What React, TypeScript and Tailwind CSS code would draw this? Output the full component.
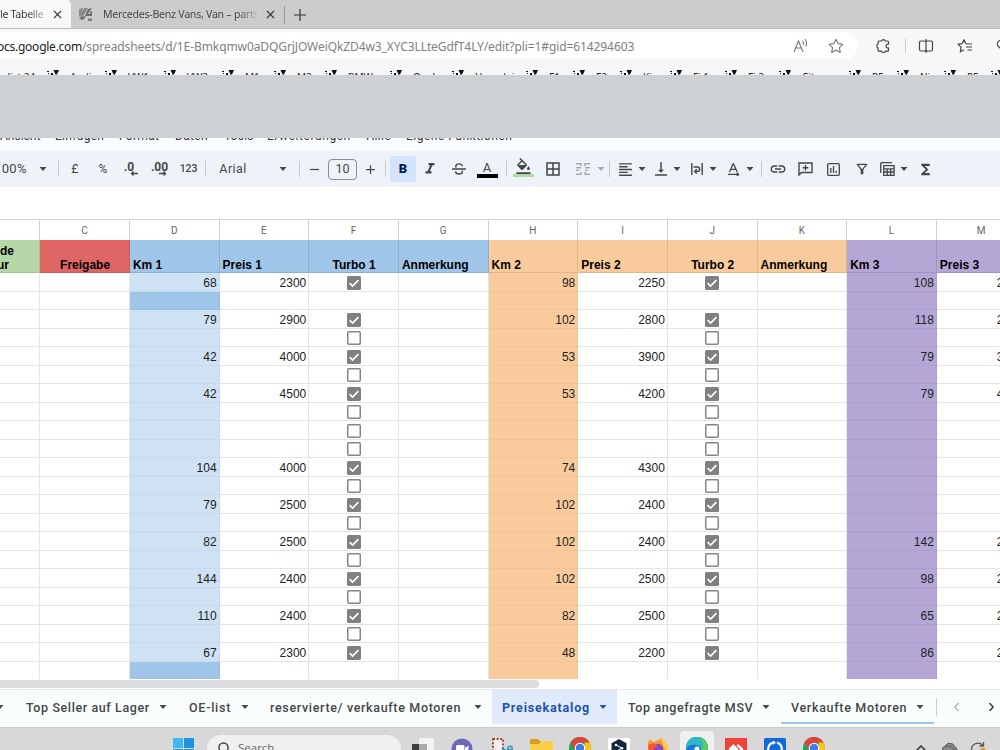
import React from "react";
import {
  MdAdd,
  MdBorderAll,
  MdFormatAlignLeft,
  MdFormatColorFill,
  MdFormatItalic,
  MdFunctions,
  MdLink,
  MdOutlineFilterAlt,
  MdRemove,
  MdVerticalAlignBottom,
} from "react-icons/md";

type Mark = "on" | "off" | "none";

type SheetRow = {
  mark: Mark;
  values?: string[];
};

const rows: SheetRow[] = [
  { mark: "on", values: ["68", "2300", "98", "2250", "108", "2300"] },
  { mark: "none" },
  { mark: "on", values: ["79", "2900", "102", "2800", "118", "2700"] },
  { mark: "off" },
  { mark: "on", values: ["42", "4000", "53", "3900", "79", "3700"] },
  { mark: "off" },
  { mark: "on", values: ["42", "4500", "53", "4200", "79", "4000"] },
  { mark: "off" },
  { mark: "off" },
  { mark: "off" },
  { mark: "on", values: ["104", "4000", "74", "4300", "", ""] },
  { mark: "off" },
  { mark: "on", values: ["79", "2500", "102", "2400", "", ""] },
  { mark: "off" },
  { mark: "on", values: ["82", "2500", "102", "2400", "142", "2300"] },
  { mark: "off" },
  { mark: "on", values: ["144", "2400", "102", "2500", "98", "2500"] },
  { mark: "off" },
  { mark: "on", values: ["110", "2400", "82", "2500", "65", "2600"] },
  { mark: "off" },
  { mark: "on", values: ["67", "2300", "48", "2200", "86", "2200"] },
  { mark: "none" },
];

const headers = [
  { letter: "C", label: "Freigabe", cls: "bg-[#e06666] justify-center pr-[2px]" },
  { letter: "D", label: "Km 1", cls: "bg-[#9fc5e8]" },
  { letter: "E", label: "Preis 1", cls: "bg-[#9fc5e8]" },
  { letter: "F", label: "Turbo 1", cls: "bg-[#9fc5e8] justify-center pr-[2px]" },
  { letter: "G", label: "Anmerkung", cls: "bg-[#9fc5e8]" },
  { letter: "H", label: "Km 2", cls: "bg-[#f9cb9c]" },
  { letter: "I", label: "Preis 2", cls: "bg-[#f9cb9c]" },
  { letter: "J", label: "Turbo 2", cls: "bg-[#f9cb9c] justify-center pr-[2px]" },
  { letter: "K", label: "Anmerkung", cls: "bg-[#f9cb9c]" },
  { letter: "L", label: "Km 3", cls: "bg-[#b4a7d6]" },
  { letter: "M", label: "Preis 3", cls: "bg-[#b4a7d6]" },
];

const bookmarks = [
  { label: "Audi", cls: "w-[58px]" },
  { label: "VW1", cls: "w-[59px]" },
  { label: "VW2", cls: "w-[58px]" },
  { label: "M1", cls: "w-[52px]" },
  { label: "M2", cls: "w-[51px]" },
  { label: "BMW", cls: "w-[65px]" },
  { label: "Opel", cls: "w-[62px]" },
  { label: "Hyundai", cls: "w-[74px]" },
  { label: "F1", cls: "w-[47px]" },
  { label: "F2", cls: "w-[47px]" },
  { label: "Kia", cls: "w-[50px]" },
  { label: "Fi 1", cls: "w-[55px]" },
  { label: "Fi 2", cls: "w-[54px]" },
  { label: "Citroen", cls: "w-[70px]" },
  { label: "P5", cls: "w-[48px]" },
  { label: "Nis", cls: "w-[47px]" },
  { label: "P5", cls: "w-[47px]" },
  { label: "", cls: "w-[20px]" },
];

const Close = ({ cls }: { cls: string }) => (
  <svg viewBox="0 0 10 10" className={`h-[9px] w-[9px] shrink-0 ${cls}`} stroke="#333" strokeWidth="1.4" fill="none">
    <path d="M1 1l8 8M9 1l-8 8" />
  </svg>
);

const TabStrip = () => (
  <div className="flex h-[29px] items-end border-b border-[#bdbdbd] bg-[#cdcccc] font-['Noto_Sans','Open_Sans',sans-serif] text-[11px] text-[#333]">
    <div className="flex h-[29px] w-[71px] items-center rounded-tr-md bg-[#f9f8f8]">
      <span className="w-[44px] whitespace-nowrap bg-gradient-to-r from-[#333] from-60% to-[#bbb] bg-clip-text pt-[2px] text-[10.6px] tracking-[-0.3px] text-transparent">
        le Tabelle
      </span>
      <Close cls="ml-[9px] mt-[2px]" />
    </div>
    <div className="flex h-[29px] items-center pt-[2px]">
      <svg viewBox="0 0 14 14" className="ml-[8px] h-[14px] w-[14px]">
        <path d="M0 1l4-1-1 6-3 3zM5 0h4L5 7 0 13l2-6z" fill="#8b8b8b" />
        <path d="M9 1l4-1-4 6h2V4l2-1v5H6zM2 9l5-1-2 3-3 1z" fill="#6d6d6d" />
        <path d="M9 10.500h4V13H9z" fill="#7d7d7d" />
      </svg>
      <span className="ml-[10px] w-[154px] whitespace-nowrap bg-gradient-to-r from-[#444] from-88% to-[#bbb] bg-clip-text text-[10.6px] tracking-[-0.26px] text-transparent">
        Mercedes-Benz Vans, Van – parts
      </span>
      <Close cls="ml-[9px]" />
      <span className="ml-[9px] h-[18px] w-px bg-[#999]" />
      <svg viewBox="0 0 12 12" className="ml-[9px] h-[12px] w-[12px]" stroke="#333" strokeWidth="1.2">
        <path d="M6 0v12M0 6h12" />
      </svg>
    </div>
  </div>
);

const AddressBar = () => (
  <div className="flex h-[33px] items-center bg-[#f7f7f7] text-[#555]">
    <div className="flex h-[27px] w-[858px] shrink-0 items-center rounded-r-full bg-white font-['Noto_Sans','Open_Sans',sans-serif] text-[12px] whitespace-nowrap">
      <span className="-ml-[3px] w-[85px] shrink-0 pt-[2px] text-[#222] tracking-[-0.25px]">ocs.google.com</span>
      <span className="w-[700px] shrink-0 pt-[2px] text-[#808080] tracking-[-0.09px]">
        /spreadsheets/d/1E-Bmkqmw0aDQGrjJOWeiQkZD4w3_XYC3LLteGdfT4LY/edit?pli=1#gid=614294603
      </span>
      <svg viewBox="0 0 16 16" className="ml-[11px] h-4 w-4 shrink-0" fill="none" stroke="#777" strokeWidth="1.1">
        <path d="M1 14L5.500 3L10 14M2.700 10h5.600M9.500 2.500q1.600 2 .600 4.500M12 1q2.600 3.500.800 7.500" />
      </svg>
      <svg viewBox="0 0 16 16" className="ml-[19px] h-4 w-4 shrink-0" fill="none" stroke="#777" strokeWidth="1.1" strokeLinejoin="round">
        <path d="M8 1.200l2.100 4.400 4.800.600-3.500 3.400.900 4.800L8 12.100l-4.300 2.300.900-4.800L1.100 6.200l4.800-.600z" />
      </svg>
    </div>
    <svg viewBox="0 0 16 16" className="ml-[17px] h-4 w-4 shrink-0" fill="none" stroke="#444" strokeWidth="1.2" strokeLinejoin="round">
      <path d="M4 3h2.600a1.900 1.900 0 0 1 3.600 0h2.300a1 1 0 0 1 1 1v2.300a1.900 1.900 0 1 0 0 3.600v2.300a1 1 0 0 1-1 1h-2.300a1.900 1.900 0 0 1-3.600 0H4a1 1 0 0 1-1-1V9.900a1.900 1.900 0 0 1 0-3.600V4a1 1 0 0 1 1-1z" />
    </svg>
    <span className="ml-[14px] h-[14px] w-px shrink-0 bg-[#ccc]" />
    <svg viewBox="0 0 16 16" className="ml-[12px] h-4 w-4 shrink-0" fill="none" stroke="#444" strokeWidth="1.2">
      <path d="M6 3H3a1.500 1.500 0 0 0-1.500 1.500v7A1.500 1.500 0 0 0 3 13h3a2 2 0 0 0 2-1V4a2 2 0 0 0-2-1zM10 3h3a1.500 1.500 0 0 1 1.500 1.500v7A1.500 1.500 0 0 1 13 13h-3a2 2 0 0 1-2-1M8 1v14M8 4a2 2 0 0 1 2-1" />
    </svg>
    <svg viewBox="0 0 16 16" className="ml-[23px] h-4 w-4 shrink-0" fill="none" stroke="#444" strokeWidth="1.2" strokeLinejoin="round">
      <path d="M9.500 5.500h-.800L7 1.800 5.200 5.600 1 6.200l3 3-.700 4.600L7 11.800M9.500 6H15M9 9h6M10.500 12H15" />
    </svg>
    <svg viewBox="0 0 16 16" className="ml-[23px] h-4 w-4 shrink-0" fill="none" stroke="#444" strokeWidth="1.2">
      <path d="M8 13.500L2 8a3.600 3.600 0 0 1 6-4" />
    </svg>
  </div>
);

const BookmarkBar = () => (
  <div className="flex h-[13px] overflow-hidden bg-[#f7f7f7] font-['Noto_Sans','Open_Sans',sans-serif] text-[10px] text-[#222]">
    <span className="mt-[8px] w-[47px] shrink-0 pl-1 leading-[14px] whitespace-nowrap">dist 24</span>
    {bookmarks.map((b, i) => (
      <div key={i} className={`flex shrink-0 ${b.cls}`}>
        <svg viewBox="0 0 12 10" className="mt-[8px] h-[10px] w-[12px] shrink-0" fill="#111">
          <path d="M0 1h2v1H0zM4 3h2v2H4zM1 3h1v1H1zM6.500 0H12l-2 4.500H8.500z" />
        </svg>
        <span className="mt-[8px] pl-[11px] leading-[14px] whitespace-nowrap">{b.label}</span>
      </div>
    ))}
  </div>
);

const MenuBar = () => (
  <div className="flex h-[13px] items-end overflow-hidden bg-[#fafdfe] font-[Roboto,sans-serif] text-[12px] text-[#333]">
    <div className="flex h-[13px] items-start leading-[14px] whitespace-nowrap">
      <span className="-mt-[9px] w-[55px]">Ansicht</span>
      <span className="-mt-[9px] w-[64px] tracking-[0.3px]">Einfügen</span>
      <span className="-mt-[9px] w-[56px] tracking-[0.3px]">Format</span>
      <span className="-mt-[9px] w-[49px] tracking-[0.3px]">Daten</span>
      <span className="-mt-[9px] w-[43px]">Tools</span>
      <span className="-mt-[9px] w-[99px] tracking-[0.55px]">Erweiterungen</span>
      <span className="-mt-[9px] w-[40px]">Hilfe</span>
      <span className="-mt-[9px] tracking-[0.5px]">Eigene Funktionen</span>
    </div>
  </div>
);

const Caret = ({ cls }: { cls: string }) => (
  <svg viewBox="0 0 8 4" className={`h-1 w-2 shrink-0 ${cls}`} fill="currentColor">
    <path d="M.5 0h7L4 4z" />
  </svg>
);

const Divider = ({ cls }: { cls: string }) => <span className={`h-4 w-px shrink-0 bg-[#c7cad0] ${cls}`} />;

const Slot = ({ cls, children }: { cls: string; children: React.ReactNode }) => (
  <span className={`flex shrink-0 items-center justify-center whitespace-nowrap ${cls}`}>{children}</span>
);

const Toolbar = () => (
  <div className="flex h-[36px] items-center overflow-hidden bg-[#eef3fa] font-[Roboto,sans-serif] text-[12.5px] text-[#444746]">
    <Slot cls="w-[27px] justify-end">
      <span className="text-[13px] tracking-[0.4px]">100%</span>
    </Slot>
    <Caret cls="ml-[11.5px]" />
    <Divider cls="ml-[11px]" />
    <Slot cls="ml-[8.5px] w-4">£</Slot>
    <Slot cls="ml-[12px] w-4 text-[12px]">%</Slot>
    <Slot cls="ml-[12px] w-4 flex-col">
      <span className="-ml-[4px] text-[12px] leading-[10px] font-bold">.0</span>
      <svg viewBox="0 0 8 5" className="-mt-px ml-[6px] h-[5px] w-2" fill="none" stroke="currentColor" strokeWidth="1.3">
        <path d="M8 2.500H1.500M3.500 .5l-2 2 2 2" />
      </svg>
    </Slot>
    <Slot cls="ml-[12.5px] w-4 flex-col">
      <span className="text-[12px] leading-[10px] font-bold">.00</span>
      <svg viewBox="0 0 8 5" className="-mt-px ml-[6px] h-[5px] w-2" fill="none" stroke="currentColor" strokeWidth="1.3">
        <path d="M0 2.500h6.500M4.500 .5l2 2-2 2" />
      </svg>
    </Slot>
    <Slot cls="ml-[13px] w-4 text-[10.5px]">
      <span className="font-medium -tracking-[0.2px]">123</span>
    </Slot>
    <Divider cls="ml-[8.5px]" />
    <Slot cls="ml-[13px] w-[28px]">
      <span className="tracking-[0.4px]">Arial</span>
    </Slot>
    <Caret cls="ml-[32px]" />
    <Divider cls="ml-[12px]" />
    <Slot cls="ml-[6px] w-4">
      <MdRemove className="h-[15px] w-[15px] shrink-0" />
    </Slot>
    <Slot cls="ml-[6px] h-[21px] w-[29px] rounded-[4px] border border-[#8a8d8c] text-[12.5px]">10</Slot>
    <Slot cls="ml-[5.5px] w-4">
      <MdAdd className="h-[15px] w-[15px] shrink-0" />
    </Slot>
    <Divider cls="ml-[6.5px]" />
    <Slot cls="ml-[4px] h-[26px] w-[26px] rounded-[3px] bg-[#d3e3fd] text-[13px] font-black text-[#041e49]">B</Slot>
    <Slot cls="ml-[6px] w-4">
      <MdFormatItalic className="h-[18px] w-[18px] shrink-0" />
    </Slot>
    <Slot cls="ml-[12.5px] w-4">
      <svg viewBox="0 0 14 12" className="h-3 w-[14px] shrink-0" fill="none" stroke="currentColor" strokeWidth="1.4">
        <path d="M0 6h14M10.300 3.300A3 2.500 0 0 0 7 .9C5 .9 3.800 2 3.800 3.300c0 .5.200.900.500 1.200M3.500 8.300C3.700 10 5.200 11 7 11s3.400-.900 3.400-2.300c0-.4-.1-.800-.3-1.100" />
      </svg>
    </Slot>
    <Slot cls="ml-[9.5px] w-[22px] flex-col pt-px">
      <span className="text-[13px] leading-[13px]">A</span>
      <span className="h-1 w-[21px] bg-black" />
    </Slot>
    <Divider cls="ml-[8px]" />
    <Slot cls="ml-[5px] w-[22px] flex-col">
      <MdFormatColorFill className="-mt-[3px] -mb-px h-[17px] w-[17px] shrink-0" />
      <span className="h-[3px] w-[21px] bg-[#b6d7a8]" />
    </Slot>
    <Slot cls="ml-[11px] w-4">
      <MdBorderAll className="h-[18px] w-[18px] shrink-0" />
    </Slot>
    <Slot cls="ml-[14px] w-4 text-[#a5a9ad]">
      <svg viewBox="0 0 14 12" className="h-3 w-[14px]" fill="none" stroke="currentColor" strokeWidth="1.4">
        <path d="M0 .8h5v2.500M9 3.300V.8h5M0 11.200h5V8.700M9 8.700v2.500h5M0 4.700h5M9 4.700h5M0 7.400h3M9 7.400h3" />
      </svg>
    </Slot>
    <Caret cls="ml-[6px] text-[#a5a9ad]" />
    <Divider cls="ml-[4px]" />
    <Slot cls="ml-[7px] w-4">
      <MdFormatAlignLeft className="h-[17px] w-[17px] shrink-0" />
    </Slot>
    <Caret cls="ml-[4.5px]" />
    <Slot cls="ml-[7.5px] w-4">
      <MdVerticalAlignBottom className="h-[18px] w-[18px] shrink-0" />
    </Slot>
    <Caret cls="ml-[4px]" />
    <Slot cls="ml-[8px] w-4">
      <svg viewBox="0 0 12 12" className="h-3 w-3" fill="none" stroke="currentColor" strokeWidth="1.4">
        <path d="M.8 0v12M11.200 0v12M2.500 4h4a2.200 2.200 0 0 1 0 4.400H4M5.800 6.200L3.600 8.400l2.200 2.200" />
      </svg>
    </Slot>
    <Caret cls="ml-[4px]" />
    <Slot cls="ml-[9px] w-4">
      <svg viewBox="0 0 12 13" className="h-[13px] w-3" fill="none" stroke="currentColor" strokeWidth="1.3">
        <path d="M1.500 9L5 1h.6l3.500 8M3 6.300h4.800M0 11.400h10M8.800 9.800l1.800 1.600-1.800 1.600" />
      </svg>
    </Slot>
    <Caret cls="ml-[3.5px]" />
    <Divider cls="ml-[7px]" />
    <Slot cls="ml-[8px] w-4">
      <MdLink className="h-[18px] w-[18px] shrink-0" />
    </Slot>
    <Slot cls="ml-[12px] w-4">
      <svg viewBox="0 0 15 14" className="h-[14px] w-[15px]" fill="none" stroke="currentColor" strokeWidth="1.4">
        <path d="M1 13V1h13v9.500H3.500zM7.500 3v5.600M4.700 5.800h5.600" />
      </svg>
    </Slot>
    <Slot cls="ml-[12px] w-4">
      <svg viewBox="0 0 13 13" className="h-[13px] w-[13px]" fill="none" stroke="currentColor" strokeWidth="1.3">
        <rect x=".7" y=".7" width="11.6" height="11.6" rx="1" />
        <path d="M3.800 5v5M6.500 3v7M9.200 7.800V10" />
      </svg>
    </Slot>
    <Slot cls="ml-[12px] w-4">
      <MdOutlineFilterAlt className="h-4 w-4 shrink-0" />
    </Slot>
    <Slot cls="ml-[10px] w-4">
      <svg viewBox="0 0 15 14" className="h-[14px] w-[15px]" fill="none" stroke="currentColor" strokeWidth="1.3">
        <path d="M.7 11V1.700a1 1 0 0 1 1-1H12M3.700 3.600h10.400v9.700H3.700zM3.700 6.800h10.400M3.700 10h10.400M7.200 6.800v6.500M10.700 6.800v6.500" />
      </svg>
    </Slot>
    <Caret cls="ml-[4px]" />
    <Slot cls="ml-[10px] w-4">
      <MdFunctions className="h-[17px] w-[17px] shrink-0" />
    </Slot>
  </div>
);

const CheckMark = ({ mark }: { mark: Mark }) => {
  if (mark === "none") return null;
  return (
    <svg viewBox="0 0 14 14" className="mt-[1.5px] h-[14px] w-[14px]">
      {mark === "on" ? (
        <>
          <rect width="14" height="14" rx="1.5" fill="#808080" />
          <path d="M2.600 7.200l3 2.900 5.800-6" fill="none" stroke="#fff" strokeWidth="1.6" />
        </>
      ) : (
        <rect x=".75" y=".75" width="12.5" height="12.5" rx="1" fill="#fff" stroke="#858585" strokeWidth="1.5" />
      )}
    </svg>
  );
};

const cellBase = "flex h-[18.5px] w-[89.67px] shrink-0 border-r border-b items-center";
const plain = `${cellBase} border-[#e4e4e4]`;
const number = `${cellBase} justify-end pt-[2px] pr-[2px]`;

const DataRow = ({ row, index }: { row: SheetRow; index: number }) => {
  const v = row.values ?? ["", "", "", "", "", ""];
  const km1 = index === 1 || index === 21 ? "bg-[#9fc5e8] border-[#97bfe4]" : "bg-[#cfe2f3] border-[#c5daee]";
  return (
    <div className="flex h-[18.5px]">
      <div className="h-[18.5px] w-[40.3px] shrink-0 border-r border-b border-[#e4e4e4]" />
      <div className={plain} />
      <div className={`${number} ${km1}`}>{v[0]}</div>
      <div className={`${number} border-[#e4e4e4]`}>{v[1]}</div>
      <div className={`${plain} justify-center`}>
        <CheckMark mark={row.mark} />
      </div>
      <div className={plain} />
      <div className={`${number} border-[#f0c497] bg-[#f9cb9c]`}>{v[2]}</div>
      <div className={`${number} border-[#e4e4e4]`}>{v[3]}</div>
      <div className={`${plain} justify-center`}>
        <CheckMark mark={row.mark} />
      </div>
      <div className={plain} />
      <div className={`${number} border-[#ac9fcf] bg-[#b4a7d6]`}>{v[4]}</div>
      <div className={`${number} border-[#e4e4e4]`}>{v[5]}</div>
    </div>
  );
};

const Sheet = () => (
  <div className="h-[460px] overflow-hidden border-t border-[#d5d5d5] bg-white font-['Liberation_Sans',Arial,sans-serif] text-[12px] text-[#222]">
    <div className="flex h-[20px] font-[Roboto,sans-serif] text-[10px] text-[#666]">
      <div className="w-[40.3px] shrink-0 border-r border-[#d0d0d0]" />
      {headers.map((h) => (
        <div key={h.letter} className="flex w-[89.67px] shrink-0 items-center justify-center border-r border-[#d0d0d0]">
          {h.letter}
        </div>
      ))}
    </div>
    <div className="flex h-[33px] font-bold text-black">
      <div className="w-[40.3px] shrink-0 border-r border-b border-black/10 bg-[#b6d7a8] pt-[4px] leading-[14px]">
        <div>de</div>
        <div className="-ml-[3px]">ur</div>
      </div>
      {headers.map((h) => (
        <div
          key={h.letter}
          className={`flex w-[89.67px] shrink-0 items-end border-r border-b border-black/10 pl-[3px] leading-[14px] ${h.cls}`}
        >
          {h.label}
        </div>
      ))}
    </div>
    {rows.map((row, i) => (
      <DataRow key={i} row={row} index={i} />
    ))}
  </div>
);

const SheetTabs = () => (
  <div className="flex h-[38px] items-start border-t border-[#e6eaec] bg-[#f9fdfd] font-[Roboto,sans-serif] text-[12.5px] font-medium text-[#444746]">
    <div className="flex h-[34px] items-center whitespace-nowrap">
      <Caret cls="-ml-[4px]" />
      <span className="ml-[22px] w-[133px] pt-[2px] tracking-[0.6px]">Top Seller auf Lager</span>
      <Caret cls="" />
      <span className="ml-[22px] w-[52px] pt-[2px] tracking-[0.75px]">OE-list</span>
      <Caret cls="" />
      <span className="ml-[21px] w-[204px] pt-[2px] tracking-[0.66px]">reservierte/ verkaufte Motoren</span>
      <Caret cls="" />
      <div className="ml-[10px] flex h-[34px] w-[125px] items-center bg-[#e1eafa] pl-[10px] font-bold text-[#1c55ac]">
        <span className="w-[97px] pt-[2px] tracking-[0.8px]">Preisekatalog</span>
        <Caret cls="" />
      </div>
      <span className="ml-[11px] w-[134px] pt-[2px] tracking-[0.6px]">Top angefragte MSV</span>
      <Caret cls="" />
      <div className="ml-[11px] flex h-[34px] w-[153px] items-center border-b-2 border-[#9fc5e8] pt-[2px] pl-[10px]">
        <span className="w-[125px] pt-[2px] tracking-[0.68px]">Verkaufte Motoren</span>
        <Caret cls="" />
      </div>
      <span className="ml-[2px] h-[18px] w-px bg-[#c8cccc]" />
      <svg viewBox="0 0 5 8" className="ml-[17px] h-2 w-[5px]" fill="none" stroke="#aaa" strokeWidth="1.3">
        <path d="M4.500 0L.8 4l3.700 4" />
      </svg>
      <svg viewBox="0 0 5 8" className="ml-[30px] h-2 w-[5px]" fill="none" stroke="#444" strokeWidth="1.6">
        <path d="M.5 0l3.700 4L.5 8" />
      </svg>
    </div>
  </div>
);

const Chrome = () => (
  <svg viewBox="0 0 24 24" className="h-[22px] w-[22px]">
    <circle cx="12" cy="12" r="12" fill="#2ba24c" />
    <path d="M1.600 6A12 12 0 0 1 22.400 6L12 6.500 7 14z" fill="#dc4437" />
    <path d="M22.400 6A12 12 0 0 1 12 24l5-9V6z" fill="#fbc116" />
    <circle cx="12" cy="12" r="5.8" fill="#fff" />
    <circle cx="12" cy="12" r="4.6" fill="#3e7de8" />
  </svg>
);

const Taskbar = () => (
  <div className="flex h-[23px] items-start overflow-hidden border-t border-[#c9c9c9] bg-[#d9d8d8]">
    <svg viewBox="0 0 21 21" className="mt-[10px] ml-[173px] h-[21px] w-[21px] shrink-0" fill="#1e93dc">
      <path d="M0 0h10v10H0z" fill="#41b9ee" />
      <path d="M11 0h10v10H11zM0 11h10v10H0zM11 11h10v10H11z" />
    </svg>
    <div className="mt-[7px] ml-[13px] flex h-[28px] w-[194px] shrink-0 items-start rounded-full bg-[#f1f0f0] pl-[9px]">
      <svg viewBox="0 0 14 14" className="mt-[7px] h-[14px] w-[14px]" fill="none" stroke="#444" strokeWidth="1.5">
        <circle cx="7.5" cy="5.5" r="4.6" />
        <path d="M4.300 8.800L.5 13" />
      </svg>
      <span className="mt-[5px] ml-[8px] font-['Open_Sans',sans-serif] text-[11.5px] leading-[16px] text-[#666]">Search</span>
    </div>
    <svg viewBox="0 0 22 20" className="mt-[10px] ml-[11px] h-5 w-[22px] shrink-0">
      <path d="M7 0h15v14H7z" fill="#f3f3f3" />
      <path d="M0 6h15v14H0z" fill="#3e3e3e" />
      <path d="M7 6h8v8H7z" fill="#aaa" />
    </svg>
    <svg viewBox="0 0 22 22" className="mt-[10px] ml-[17px] h-[22px] w-[22px] shrink-0">
      <circle cx="11" cy="11" r="10.5" fill="#6b68b8" />
      <rect x="5" y="7" width="8.5" height="9" rx="1.5" fill="#fff" />
      <path d="M14 10l3.500-2.500V15L14 13z" fill="#fff" />
    </svg>
    <svg viewBox="0 0 22 22" className="mt-[10px] ml-[19px] h-[22px] w-[22px] shrink-0" fill="none">
      <path d="M1 1h10v16H1z" fill="#f3eeec" stroke="#a94a35" strokeWidth="2" strokeDasharray="2 1.6" />
      <path d="M10 17l9-6M10 10l9 7" stroke="#3696c4" strokeWidth="2" />
      <circle cx="18" cy="10.5" r="2.2" stroke="#3696c4" strokeWidth="1.6" />
    </svg>
    <svg viewBox="0 0 23 20" className="mt-[11px] ml-[16px] h-5 w-[23px] shrink-0">
      <path d="M0 1a1 1 0 0 1 1-1h7l2 2h12a1 1 0 0 1 1 1v17H0z" fill="#d79c22" />
      <path d="M0 5h9l2-3h12v18H0z" fill="#fbcf4c" />
    </svg>
    <div className="mt-[9px] ml-[16px] shrink-0">
      <Chrome />
    </div>
    <svg viewBox="0 0 22 22" className="mt-[10px] ml-[17px] h-[22px] w-[22px] shrink-0">
      <rect width="22" height="22" rx="2" fill="#fff" />
      <path d="M11 1l7.500 4.300v9L11 19l-7.500-4.700v-9z" fill="#10283c" />
      <path d="M8 7l6 3.200-6 3.300" fill="none" stroke="#fff" strokeWidth="1" />
      <circle cx="8" cy="7" r="1.3" fill="#fff" />
      <circle cx="14" cy="10.2" r="1.3" fill="#fff" />
    </svg>
    <svg viewBox="0 0 22 22" className="mt-[10px] ml-[17px] h-[22px] w-[22px] shrink-0">
      <path d="M1 5l2-4 3 3 6-2 2-2 4 4 3 4v9L11 22 1 17z" fill="#fb9a2b" />
      <path d="M14 0l4 4 3 5v6l-5-8z" fill="#fdd13d" />
      <circle cx="11" cy="11" r="5.2" fill="#7e4ac9" />
      <path d="M1 7l5-2 5 3-4 2v6l-5-2z" fill="#f4553b" />
    </svg>
    <div className="mt-[3px] ml-[11px] flex h-[30px] w-[34px] shrink-0 justify-center rounded-t bg-[#efefef] pt-[6px]">
      <svg viewBox="0 0 22 22" className="h-[22px] w-[22px]">
        <circle cx="11" cy="11" r="11" fill="#1a78d0" />
        <path d="M0 10a11 11 0 0 1 22 1c0 4-4 5-8 4 2-2 1-6-3-7-5-1-9 0-11 4z" fill="#2fb9c7" />
        <path d="M13 .2A11 11 0 0 1 22 11c0 4-4 5-8 4 2-3 5-8-1-14.800z" fill="#5ccb62" />
        <circle cx="11" cy="12" r="2.5" fill="#fff" />
      </svg>
    </div>
    <svg viewBox="0 0 22 22" className="mt-[10px] ml-[11px] h-[22px] w-[22px] shrink-0">
      <rect width="22" height="22" fill="#ef4338" />
      <path d="M8.500 6l5 5-5 5-5-5zM13 6l5.500 5-5.500 5-1.500-1.500L15 11l-3.500-3.500z" fill="#fff" />
    </svg>
    <svg viewBox="0 0 22 22" className="mt-[10px] ml-[17px] h-[22px] w-[22px] shrink-0" fill="none">
      <rect width="22" height="22" rx="1.5" fill="#0f6bdc" />
      <path d="M9 4.500a6.800 6.800 0 0 0-2 12M13 4.500a6.800 6.800 0 0 1 2 12" stroke="#fff" strokeWidth="2.2" />
      <path d="M9 2.500l3 2-3 2.500z" fill="#fff" />
    </svg>
    <div className="mt-[9px] ml-[17px] shrink-0">
      <Chrome />
    </div>
    <svg viewBox="0 0 10 6" className="mt-[17px] ml-[91px] h-[6px] w-[10px] shrink-0" fill="none" stroke="#333" strokeWidth="1.5">
      <path d="M.5 5.500L5 1l4.500 4.500" />
    </svg>
    <svg viewBox="0 0 16 12" className="mt-[15px] ml-[16px] h-3 w-4 shrink-0">
      <path d="M1 9a4 4 0 0 1 2-6 5.500 5.500 0 0 1 10 1 4 4 0 0 1 2 5v3H1z" fill="#8c8c8c" stroke="#555" />
      <path d="M3 4.500q5-4 10 3" fill="none" stroke="#555" />
    </svg>
    <svg viewBox="0 0 16 16" className="mt-[13px] ml-[12px] h-4 w-4 shrink-0" fill="none" stroke="#555" strokeWidth="1.3">
      <path d="M1.500 9a6.500 6.500 0 0 1 11-5M13.500 1v4h-4M1 12h4" />
      <circle cx="13" cy="10" r="3" fill="#e8922c" stroke="none" />
    </svg>
  </div>
);

const App: React.FC = () => (
  <div className="flex h-[750px] w-[1000px] flex-col overflow-hidden bg-white">
    <TabStrip />
    <AddressBar />
    <BookmarkBar />
    <div className="h-[63px] shrink-0 bg-[#cdd1d3]" />
    <MenuBar />
    <Toolbar />
    <div className="h-[32px] shrink-0 bg-white" />
    <Sheet />
    <div className="h-[10px] shrink-0 bg-white pt-px">
      <div className="h-2 w-[539px] rounded-r-full bg-[#dadcde]" />
    </div>
    <SheetTabs />
    <Taskbar />
  </div>
);

export default App;
